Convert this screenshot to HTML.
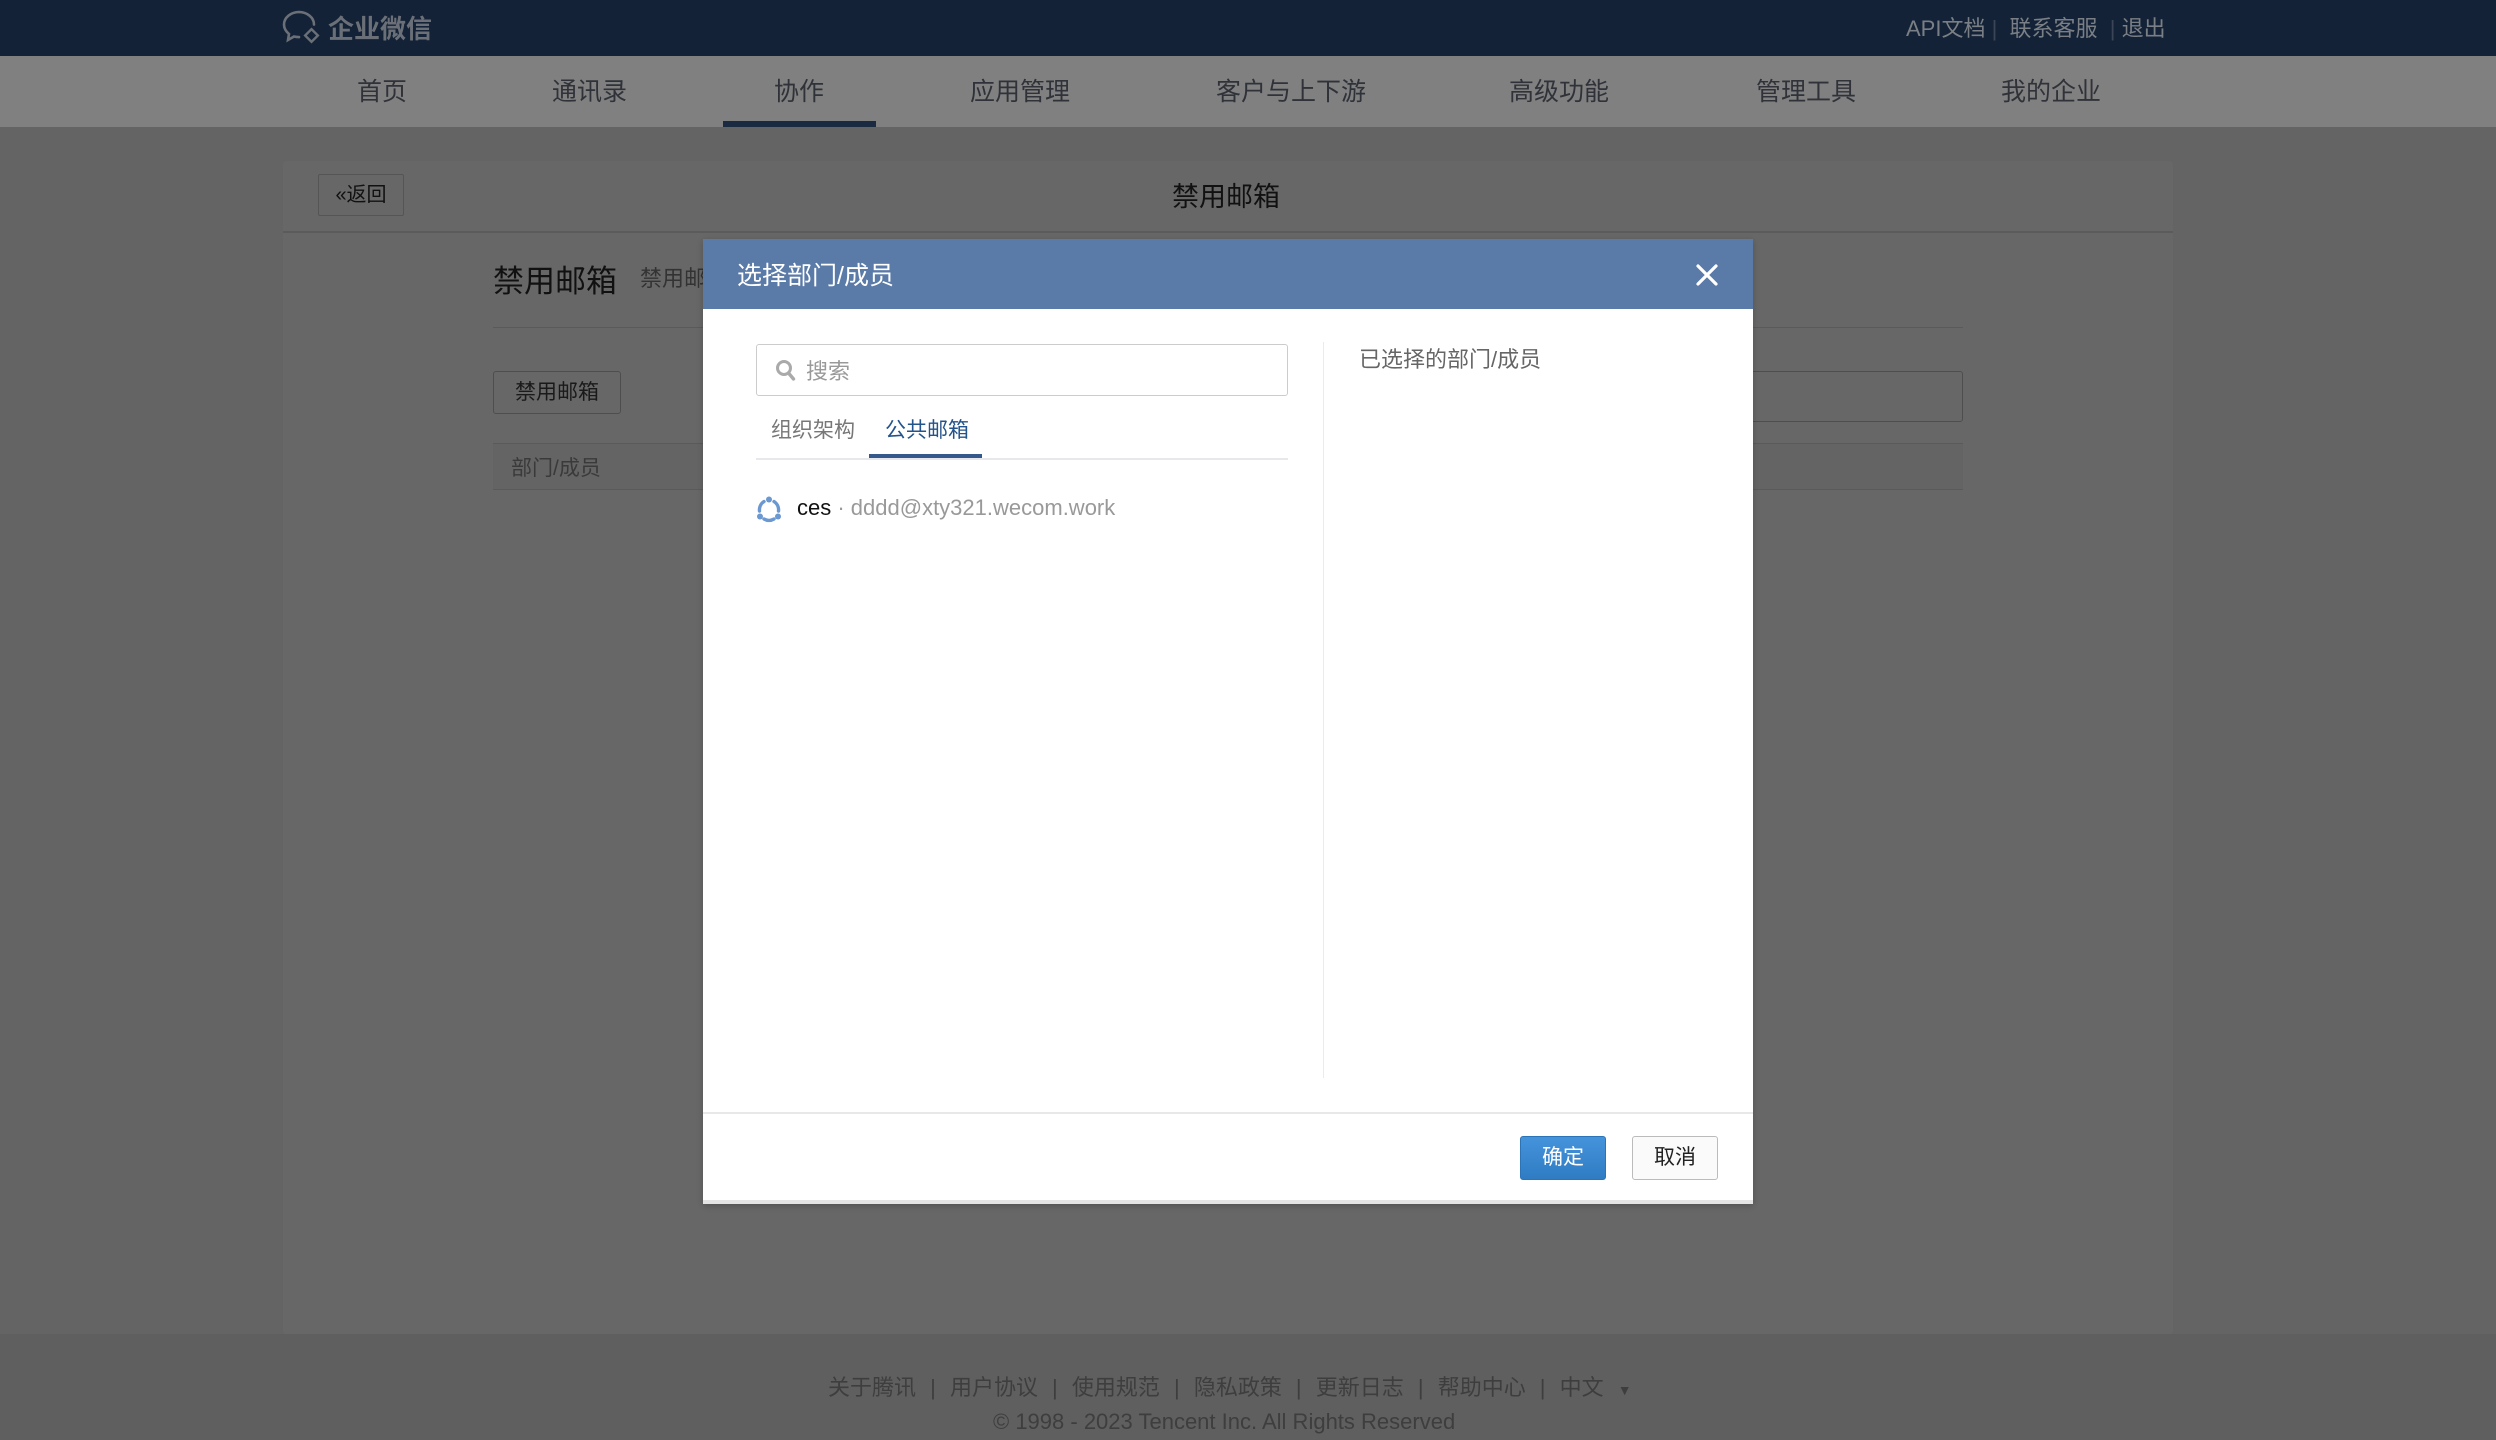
<!DOCTYPE html>
<html><head><meta charset="utf-8"><style>
*{margin:0;padding:0;box-sizing:border-box}
body{width:2496px;height:1440px;background:#5f5f5f;font-family:"Liberation Sans","Noto Sans CJK SC",sans-serif;position:relative;overflow:hidden}
.a{position:absolute;white-space:nowrap}
</style></head><body>
<div class="a" style="left:0;top:0;width:2496px;height:56px;background:#132236"></div>
<svg class="a" style="left:282px;top:9px" width="42" height="38" viewBox="0 0 42 38"><path d="M17 3C9 3 2 8.5 2 15.5c0 4 2 7 5 9.5l-1 6 6-3.5c1.5.4 3 .6 5 .6" fill="none" stroke="#6b7078" stroke-width="2.6" stroke-linecap="round"/><path d="M17 3c8 0 15 5.5 15 12.5" fill="none" stroke="#6b7078" stroke-width="2.6" stroke-linecap="round"/><rect x="25" y="22" width="9" height="9" transform="rotate(45 29.5 26.5)" fill="none" stroke="#6b7078" stroke-width="2.4"/></svg>
<div class="a" style="left:328px;top:9px;font-size:26px;color:#6b7078;font-weight:bold">企业微信</div>
<div class="a" style="left:1906px;top:11px;font-size:22px;color:#7a7f86">API文档 <span style="color:#3a4657">|</span>&nbsp; 联系客服 &nbsp;<span style="color:#3a4657">|</span>&nbsp;退出</div>
<div class="a" style="left:0;top:56px;width:2496px;height:71px;background:#808080"></div>
<div class="a" style="left:357px;top:72px;font-size:25px;color:#2f3238">首页</div>
<div class="a" style="left:552px;top:72px;font-size:25px;color:#2f3238">通讯录</div>
<div class="a" style="left:774px;top:72px;font-size:25px;color:#2f3238">协作</div>
<div class="a" style="left:970px;top:72px;font-size:25px;color:#2f3238">应用管理</div>
<div class="a" style="left:1216px;top:72px;font-size:25px;color:#2f3238">客户与上下游</div>
<div class="a" style="left:1509px;top:72px;font-size:25px;color:#2f3238">高级功能</div>
<div class="a" style="left:1756px;top:72px;font-size:25px;color:#2f3238">管理工具</div>
<div class="a" style="left:2001px;top:72px;font-size:25px;color:#2f3238">我的企业</div>
<div class="a" style="left:723px;top:121px;width:153px;height:6px;background:#1a2a40"></div>
<div class="a" style="left:0;top:127px;width:2496px;height:1207px;background:#646464"></div>
<div class="a" style="left:283px;top:161px;width:1890px;height:1173px;background:#676767;border-radius:3px"></div>
<div class="a" style="left:283px;top:231px;width:1890px;height:2px;background:#5b5b5b"></div>
<div class="a" style="left:318px;top:174px;width:86px;height:42px;border:1px solid #555;border-radius:2px;font-size:20px;color:#111;line-height:40px;text-align:center">«返回</div>
<div class="a" style="left:1172px;top:175px;font-size:27px;color:#111">禁用邮箱</div>
<div class="a" style="left:493px;top:256px;font-size:31px;color:#111">禁用邮箱</div>
<div class="a" style="left:640px;top:261px;font-size:22px;color:#333">禁用邮</div>
<div class="a" style="left:493px;top:327px;width:1470px;height:1px;background:#5a5a5a"></div>
<div class="a" style="left:493px;top:371px;width:128px;height:43px;border:1px solid #4e4e4e;border-radius:3px;font-size:21px;color:#1a1a1a;line-height:41px;text-align:center">禁用邮箱</div>
<div class="a" style="left:1700px;top:371px;width:263px;height:51px;border:1px solid #4e4e4e;border-radius:3px"></div>
<div class="a" style="left:493px;top:443px;width:1470px;height:47px;background:#646464;border-top:1px solid #5a5a5a;border-bottom:1px solid #5a5a5a"></div>
<div class="a" style="left:511px;top:452px;font-size:21px;color:#3a3a3a">部门/成员</div>
<div class="a" style="left:828px;top:1370px;font-size:22px;color:#3e3e3e;word-spacing:8px">关于腾讯 | 用户协议 | 使用规范 | 隐私政策 | 更新日志 | 帮助中心 | 中文 <span style="font-size:14px">▼</span></div>
<div class="a" style="left:993px;top:1409px;font-size:22px;color:#3e3e3e">© 1998 - 2023 Tencent Inc. All Rights Reserved</div>
<div class="a" style="left:703px;top:239px;width:1050px;height:965px;background:#fff;box-shadow:0 2px 6px rgba(0,0,0,.2)">
 <div class="a" style="left:0;top:0;width:1050px;height:70px;background:#5a7aa8"></div>
 <div class="a" style="left:34px;top:17px;font-size:25px;color:#fff">选择部门/成员</div>
 <svg class="a" style="left:993px;top:25px" width="22" height="22" viewBox="0 0 22 22"><path d="M2 2L20 20M20 2L2 20" stroke="#fff" stroke-width="3.2" stroke-linecap="round"/></svg>
 <div class="a" style="left:53px;top:105px;width:532px;height:52px;border:1px solid #ccc;border-radius:3px"></div>
 <svg class="a" style="left:72px;top:120px" width="22" height="24" viewBox="0 0 22 24"><circle cx="9" cy="9" r="6.5" fill="none" stroke="#aaa" stroke-width="3"/><path d="M13.5 14l5 6" stroke="#aaa" stroke-width="3.4" stroke-linecap="round"/></svg>
 <div class="a" style="left:103px;top:115px;font-size:22px;color:#999">搜索</div>
 <div class="a" style="left:68px;top:175px;font-size:21px;color:#777">组织架构</div>
 <div class="a" style="left:182px;top:175px;font-size:21px;color:#24548c">公共邮箱</div>
 <div class="a" style="left:53px;top:219px;width:532px;height:2px;background:#e6e8eb"></div>
 <div class="a" style="left:166px;top:215px;width:113px;height:4px;background:#34598a"></div>
 <svg class="a" style="left:53px;top:257px" width="26" height="27" viewBox="0 0 26 27"><g fill="none" stroke="#6b98d0" stroke-width="3.4" stroke-linecap="round"><path d="M8 5.5A10 10 0 0 0 3.5 15"/><path d="M8 23A10 10 0 0 0 18 23"/><path d="M22.5 15A10 10 0 0 0 18 5.5"/></g><circle cx="13" cy="3.5" r="3" fill="#6b98d0"/><circle cx="4" cy="20.5" r="3" fill="#6b98d0"/><circle cx="22" cy="20.5" r="3" fill="#6b98d0"/></svg>
 <div class="a" style="left:94px;top:256px;font-size:22px;color:#111">ces <span style="color:#999">· dddd@xty321.wecom.work</span></div>
 <div class="a" style="left:620px;top:103px;width:1px;height:736px;background:#ebebeb"></div>
 <div class="a" style="left:656px;top:103px;font-size:22px;color:#666">已选择的部门/成员</div>
 <div class="a" style="left:0;top:873px;width:1050px;height:2px;background:#e8e8e8"></div>
 <div class="a" style="left:817px;top:897px;width:86px;height:44px;background:linear-gradient(#4593db,#2f7cc3);border:1px solid #2c74b8;border-radius:3px;color:#fff;font-size:21px;line-height:42px;text-align:center">确定</div>
 <div class="a" style="left:929px;top:897px;width:86px;height:44px;background:#fafafa;border:1px solid #bbb;border-radius:3px;color:#222;font-size:21px;line-height:42px;text-align:center">取消</div>
 <div class="a" style="left:0;top:961px;width:1050px;height:4px;background:#e4e4e4"></div>
</div>
</body></html>
